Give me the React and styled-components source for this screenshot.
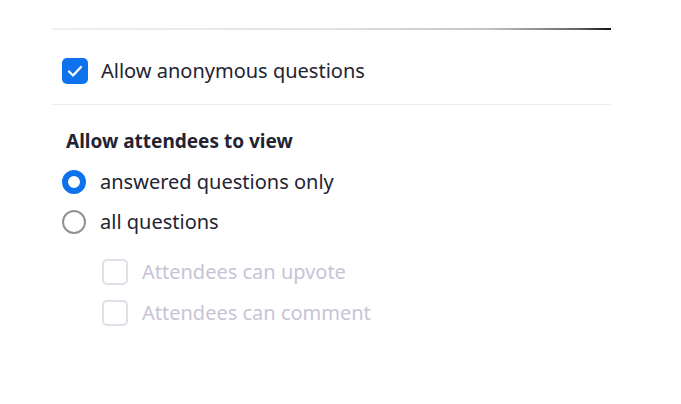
import styled, { createGlobalStyle } from 'styled-components';

const GlobalStyle = createGlobalStyle`
body{
  margin:0;
  background:#ffffff;
  font-family: "Noto Sans", "Open Sans", sans-serif;
  color:#232333;
}
`;

const App = ()=>{
  return(
    <>
      <GlobalStyle/>
      <Panel>
        <TopRule/>
        <CheckRow>
          <Box checked>
            <svg width="20" height="20" viewBox="0 0 20 20">
              <path d="M4 10.5l4 4L16 6" fill="none" stroke="#fff" strokeWidth="2.3" strokeLinecap="round" strokeLinejoin="round"/>
            </svg>
          </Box>
          <Label>Allow anonymous questions</Label>
        </CheckRow>
        <Divider/>
        <Section>
          <Heading>Allow attendees to view</Heading>
          <Row>
            <Radio selected/>
            <Label>answered questions only</Label>
          </Row>
          <Row>
            <Radio/>
            <Label>all questions</Label>
          </Row>
          <SubList>
            <Row>
              <Box disabled/>
              <Label disabled>Attendees can upvote</Label>
            </Row>
            <Row>
              <Box disabled/>
              <Label disabled>Attendees can comment</Label>
            </Row>
          </SubList>
        </Section>
      </Panel>
    </>
  )
};

const Panel = styled.div`
margin-left:52px;
width:559px;
padding-top:28px;
`;
const TopRule = styled.div`
height:2px;
background: linear-gradient(90deg, #f0f0f0 0%, #e2e2e2 50%, #c4c4c4 78%, #666 94%, #111 100%);
`;
const CheckRow = styled.div`
display:flex;
align-items:center;
gap:13px;
padding:28px 10px 20px;
`;
const Divider = styled.div`
height:1px;
background:#ececf1;
`;
const Section = styled.div`
padding:24px 10px 0;
`;
const Heading = styled.div`
font-weight:700;
font-size:19px;
line-height:24px;
margin:0 0 9px 4px;
color:#232333;
`;
const Row = styled.div`
display:flex;
align-items:center;
gap:14px;
height:40px;
`;
const SubList = styled.div`
margin:9px 0 0 40px;
& > div{ height:41px; }
`;
const Label = styled.span`
font-size:20px;
line-height:24px;
color:${p => p.disabled ? '#c6c4d6' : '#232333'};
`;
const Box = styled.span`
width:26px;
height:26px;
box-sizing:border-box;
border-radius:5px;
display:flex;
align-items:center;
justify-content:center;
flex-shrink:0;
background:${p => p.checked ? '#0e72ed' : '#fff'};
border:${p => p.checked ? 'none' : '2px solid #e0e0e8'};
`;
const Radio = styled.span`
width:24px;
height:24px;
box-sizing:border-box;
border-radius:50%;
flex-shrink:0;
background:#fff;
border:${p => p.selected ? '6px solid #0e72ed' : '2px solid #929292'};
`;

export default App;
